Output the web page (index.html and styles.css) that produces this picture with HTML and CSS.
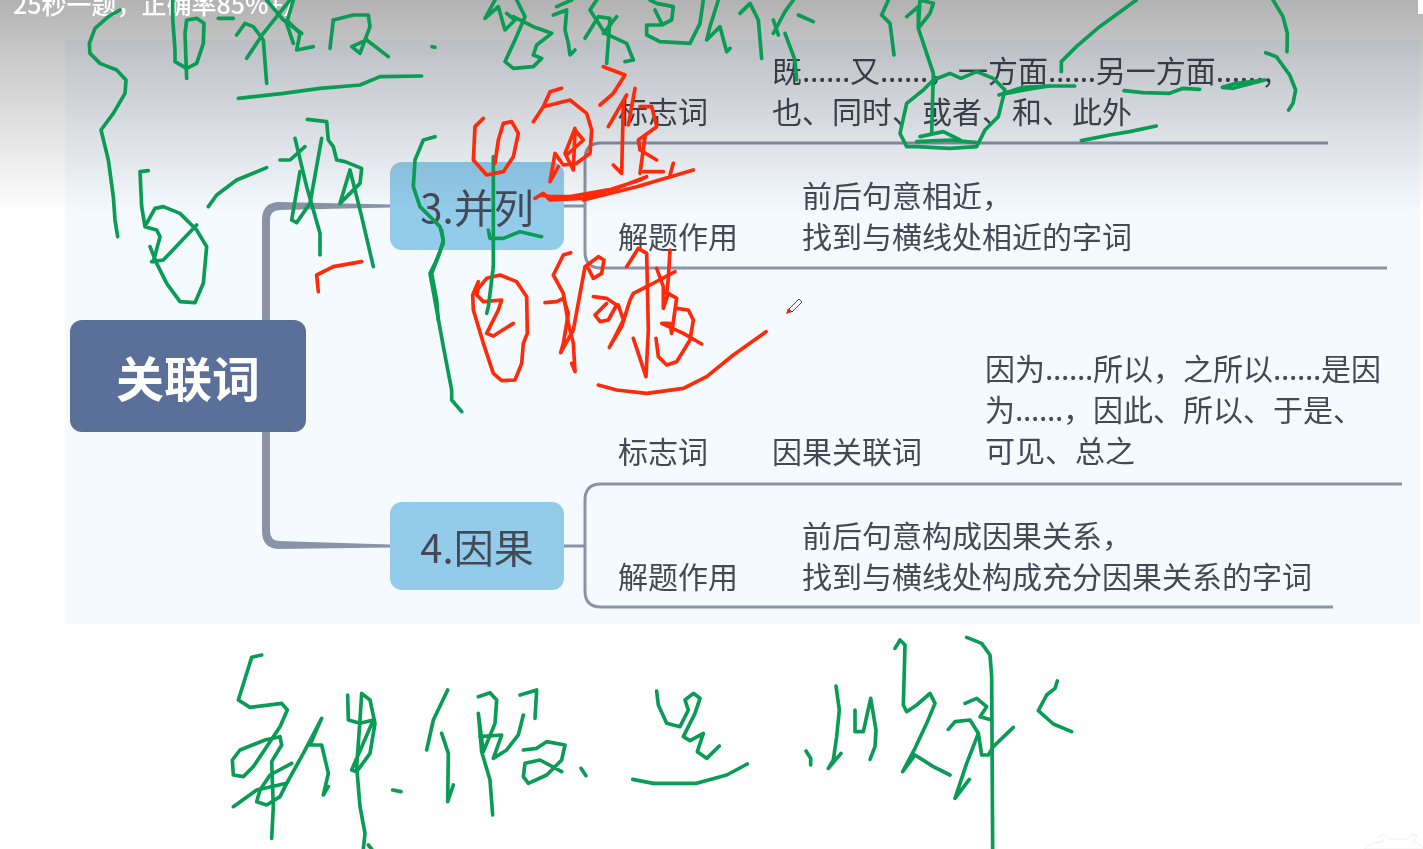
FILE: index.html
```html
<!DOCTYPE html>
<html lang="zh-CN">
<head>
<meta charset="utf-8">
<title>关联词</title>
<link rel="stylesheet" href="styles.css">
</head>
<body>
<main class="stage">
  <section class="slide">
    <svg class="links" width="1423" height="849" viewBox="0 0 1423 849" aria-hidden="true">
      <path class="trunk" d="M266 320V220Q266 206 280 206"/>
      <path class="taper" d="M278 202L390 204.5V207.5L278 210Z"/>
      <path class="trunk" d="M266 432V531Q266 545 280 545"/>
      <path class="taper" d="M278 541L390 544.5V547.5L278 549Z"/>
      <path class="branch" d="M564 206H585M1328 143H601Q585 143 585 159V252Q585 268 601 268H1387"/>
      <path class="branch" d="M564 546H585M1402 484H601Q585 484 585 500V591Q585 607 601 607H1333"/>
    </svg>
    <div class="root">关联词</div>
    <div class="topic topic-3">3.并列</div>
    <div class="topic topic-4">4.因果</div>
    <div class="t label-a">标志词</div>
    <div class="t body-a">既<span class="dots">......</span>又<span class="dots">......</span>，一方面<span class="dots">......</span>另一方面<span class="dots">......</span>,<br>也、同时、或者、和、此外</div>
    <div class="t label-b">解题作用</div>
    <div class="t body-b">前后句意相近，<br>找到与横线处相近的字词</div>
    <div class="t label-c">标志词</div>
    <div class="t mid-c">因果关联词</div>
    <div class="t body-c">因为<span class="dots">......</span>所以，之所以<span class="dots">......</span>是因<br>为<span class="dots">......</span>，因此、所以、于是、<br>可见、总之</div>
    <div class="t label-d">解题作用</div>
    <div class="t body-d">前后句意构成因果关系，<br>找到与横线处构成充分因果关系的字词</div>
  </section>
  <div class="shade"></div>
  <div class="caption">25秒一题，正确率85%+】</div>
  <svg class="ink" width="1423" height="849" viewBox="0 0 1423 849" aria-hidden="true">
    <g class="green" transform="scale(.33333)">
      <polyline points="360,30 325,50 285,85 268,130 270,160 300,190 350,210 378,240 375,280 340,340 303,390 325,480 340,590 345,660 353,710"/>
      <polyline points="518,0 518,55 525,150 525,185 560,205 590,190 610,130 612,70 590,55 560,60 555,100 560,235"/>
      <polyline points="655,55 700,55"/><polyline points="710,105 735,70 760,80 790,120 800,250"/>
      <polyline points="740,175 790,100 870,0"/><polyline points="860,60 900,100 890,150 940,140"/>
      <polyline points="800,0 850,60 905,100"/><polyline points="880,0 860,70 880,130"/>
      <polyline points="1000,60 990,145"/><polyline points="1000,60 1060,45 1105,45 1110,80 1080,160 1055,140 1100,120 1165,170"/>
      <polyline points="1296,140 1305,142"/>
      <polyline points="715,295 850,280 960,265 1080,255 1140,230 1265,228"/>
      <polyline points="625,620 650,585 710,540 800,503"/>
      <polyline points="840,480 870,480 915,440"/><polyline points="885,415 920,560 960,700 960,765"/>
      <polyline points="900,515 875,660 890,668 930,610 965,415"/>
      <polyline points="922,358 980,365 985,420 1000,440 1010,480 1035,485 1085,505 1080,550 1020,610 1050,510 1085,650 1120,800"/>
      <polyline points="445,512 420,515 425,620 435,680 470,690 480,710 460,785"/>
      <polyline points="440,670 465,625 490,620 540,640 590,690 620,740 610,850 585,908 540,905 500,850 470,790 450,740"/>
      <polyline points="455,785 490,780 590,675"/>
      <polyline points="1305,410 1270,420 1245,480 1240,560 1260,620 1320,680 1330,720 1315,770 1295,820 1310,900 1315,960"/>
    </g>
    <g class="green" transform="translate(400 230) scale(.33333)">
      <polyline points="125,0 130,40 105,100 90,130 110,240 130,350 155,480 155,510 185,545"/>
    </g>
    <g class="green" transform="translate(470 0) scale(.33333)">
      <polyline points="75,0 45,55 85,20 105,90 135,60 110,40"/>
      <polyline points="130,50 190,80 245,100 200,135 190,165 215,175 190,200 130,205 105,185 135,120 165,50 140,0"/>
      <polyline points="250,45 290,30 285,90 295,130 300,165 315,150"/><polyline points="305,0 260,20"/>
      <polyline points="345,115 385,50 420,55 410,190"/><polyline points="380,0 360,30 405,100 470,130 490,180 465,185"/><polyline points="440,50 400,100"/>
      <polyline points="540,0 560,10 610,20 605,60 575,75 530,75 530,105 570,125 660,130 690,70 700,0"/><polyline points="555,30 575,70"/>
      <polyline points="745,0 720,80 710,120 750,80 770,155 780,145"/>
      <polyline points="810,40 840,10 865,60 875,175"/>
      <polyline points="910,100 945,35 970,0"/><polyline points="985,45 1030,65"/><polyline points="945,100 975,180 980,240"/><polyline points="910,60 925,105"/>
      <polyline points="1235,45 1255,0"/><polyline points="1235,45 1260,70 1272,165"/>
      <polyline points="1310,50 1345,20 1345,85 1380,40 1390,10 1350,0 1345,85 1390,220 1385,400"/>
      <polyline points="1340,440 1310,440 1290,400 1310,310 1360,270 1390,240 1440,220 1473,235 1520,215 1570,235 1605,270 1585,350 1545,390 1520,440 1440,445 1340,440"/>
      <polyline points="1340,425 1440,420 1520,428"/><polyline points="1350,410 1420,395 1470,420"/>
      <polyline points="70,470 70,800"/>
      <polyline points="55,690 60,715 100,715 150,695 215,710"/>
    </g>
    <g class="green" transform="translate(943 0) scale(.33333)">
      <polyline points="355,215 355,185 400,140 470,80 580,0"/>
      <polyline points="990,0 1020,50 1033,100 1032,155"/>
      <polyline points="968,158 1000,170 1040,225 1058,270 1050,310 1037,330"/>
      <polyline points="168,285 240,262 320,258 395,258"/><polyline points="190,280 270,265 320,258"/>
      <polyline points="543,272 600,278 680,280 720,265 770,268"/>
      <polyline points="838,262 870,265 965,240 880,250 838,262"/>
      <polyline points="415,422 500,405 560,395 640,378"/>
    </g>
    <g class="red" transform="translate(470 0) scale(.33333)">
      <polyline points="40,355 15,380 10,480 50,525 100,515 130,470 145,400 125,365 100,370 85,420 75,490"/>
      <polyline points="275,265 240,275 220,320 190,365"/>
      <polyline points="220,320 300,300 350,340 365,390 360,460 320,490 280,495 255,460 240,545 265,500"/>
      <polyline points="315,385 285,460 310,510 315,390 340,420 290,465"/>
      <polyline points="400,200 465,225 430,280 390,315"/><polyline points="470,285 415,380"/>
      <polyline points="495,265 475,375"/><polyline points="460,310 455,520 430,495"/>
      <polyline points="510,320 545,320 560,380 505,420 510,450 560,480"/><polyline points="525,410 510,520"/>
      <polyline points="195,595 220,580 240,600 340,595 510,540 530,530 440,565 300,590 240,590 215,585"/>
      <polyline points="340,600 500,560 670,510"/><polyline points="610,490 600,525"/><polyline points="520,515 580,515"/>
    </g>
    <g class="red" transform="scale(.33333)">
      <polyline points="1085,785 1000,800 950,825 955,875"/>
    </g>
    <g class="red" transform="translate(400 230) scale(.33333)">
      <polyline points="235,155 218,195 220,240 250,340 280,430 305,452 345,450 365,400 370,340 382,310 380,200 350,155 300,135 260,145 235,175 230,195 250,215 305,210 295,240 260,310 280,318 340,280"/>
      <polyline points="512,68 490,75 460,135 490,190 505,280 520,340 525,425 515,400"/>
      <polyline points="435,218 470,215 490,205 505,250 490,340 482,368 520,300 555,110 595,80 612,90 605,130 580,145 565,115"/>
      <polyline points="580,200 620,205 650,225 625,270 600,275 585,255 620,220"/>
      <polyline points="655,225 670,270 640,330 628,352 665,290 690,210 700,190 750,165 825,125"/>
      <polyline points="680,110 715,55 740,70 745,300 738,440 700,325"/>
      <polyline points="770,115 790,170 790,235 805,190 830,205 815,310 810,280 785,280 850,310 905,342"/>
      <polyline points="810,60 805,145 800,190"/>
      <polyline points="830,235 865,240 880,270 870,330 830,395 800,405 775,380 768,325"/>
      <polyline points="595,465 650,480 740,490 850,475 920,440 1000,375 1098,305"/>
    </g>
    <g class="green" transform="translate(470 0) scale(.33333)">
      <polyline points="70,800 55,920 50,940"/>
    </g>
    <g class="green" transform="translate(200 620) scale(.33333)">
      <polyline points="185,105 155,112 115,240 150,262 245,250 262,270 240,320 190,395 160,440 130,470 100,465 97,420 120,390 195,360 240,350 245,375 215,425 220,560 215,655"/>
      <polyline points="100,560 170,510 260,490 310,400 365,295 330,375 365,375 385,460 370,525 385,500"/>
      <polyline points="275,430 210,465 180,510 170,545 200,555 240,530 260,490"/>
      <polyline points="443,225 445,300 480,310 520,300 455,450 470,455 510,400 525,310 510,240 485,220 480,300 470,440 480,560 495,640 490,687"/>
      <polyline points="505,675 515,687"/><polyline points="578,510 603,515"/>
      <polyline points="743,210 700,300 680,390"/><polyline points="725,340 745,400 743,545 760,495"/>
      <polyline points="835,230 870,218 890,240 885,310 850,395 835,280 845,395 870,480 878,585"/>
      <polyline points="840,350 905,345 880,415 920,390 955,345 970,285"/>
      <polyline points="960,225 1010,210 1005,295"/>
      <polyline points="970,390 1010,385 1040,365 1095,375 1085,420 1040,465 985,490 970,470 975,430 1020,420 1085,455"/>
      <polyline points="1143,445 1158,467"/>
    </g>
    <g class="green" transform="translate(620 620) scale(.33333)">
      <polyline points="38,478 100,490 230,490 320,465 382,432"/>
      <polyline points="110,213 115,255 140,310 180,320 205,270 195,240 220,220 240,235 225,280 190,350 210,362 250,340 232,395 260,415 298,378"/>
      <polyline points="558,393 572,415 572,435"/>
      <polyline points="648,198 658,270 650,350 640,420 625,445 663,400"/>
      <polyline points="705,270 705,335 730,335 752,235 768,330 765,380 750,418"/>
      <polyline points="825,85 840,60 855,75 850,255 860,275 890,255 930,220 945,250 920,310 885,385 848,455 885,405 940,440 990,465"/>
      <polyline points="985,328 1005,305 1050,300 1075,340 1040,430 1005,535 1048,478"/>
      <polyline points="1035,250 1070,235 1100,260 1080,290 1115,300"/>
      <polyline points="1180,322 1120,380 1105,405 1085,405 1075,340"/>
      <polyline points="1040,52 1085,70 1110,105 1115,170 1118,687"/>
      <polyline points="1312,183 1305,205 1280,225 1255,272 1300,312 1355,335"/>
    </g>
    <g class="pen">
      <path class="pen-body" d="M789 309L799 299L802 302L792 312Z"/>
      <path class="pen-tip" d="M786 314L788 308L792 312Z"/>
    </g>
    <path class="mark" d="M1380 836L1384 834L1389 839H1408L1413 834L1417 836L1413 841Q1423 845 1423 849H1364Q1370 843 1384 841Z"/>
    <rect class="corner" x="1418" y="0" width="5" height="14"/>
  </svg>
</main>
</body>
</html>
```
FILE: styles.css
```css
html, body { margin: 0; padding: 0; background: #fff; }
.stage {
  position: relative;
  width: 1423px;
  height: 849px;
  overflow: hidden;
  background: #fff;
  font-family: "Noto Sans CJK SC", "Noto Sans", sans-serif;
  filter: blur(.4px);
}
.slide { position: absolute; left: 65px; top: 40px; width: 1355px; height: 584px; background: #f5faff; }
.links { position: absolute; left: -65px; top: -40px; fill: none; stroke: #8a93a8; }
.trunk { stroke-width: 8; }
.taper { fill: #8a93a8; stroke: none; }
.branch { stroke-width: 3; }
.root {
  position: absolute; left: 5px; top: 280px; width: 236px; height: 112px;
  display: flex; align-items: center; justify-content: center;
  background: #5a7098; border-radius: 12px; color: #fff;
  font-size: 48px; font-weight: 700;
}
.topic {
  position: absolute; left: 325px; width: 174px; height: 88px;
  display: flex; align-items: center; justify-content: center;
  background: #93cceb; border-radius: 12px; color: #434a56; font-size: 40px;
}
.topic-3 { top: 122px; }
.topic-4 { top: 462px; }
.t { position: absolute; color: #434a56; font-size: 30px; line-height: 41px; white-space: nowrap; }
.dots { letter-spacing: -.35px; }
.label-a { left: 553px; top: 50px; }
.body-a { left: 707px; top: 9px; }
.label-b { left: 553px; top: 175px; }
.body-b { left: 737px; top: 134px; }
.label-c { left: 553px; top: 390px; }
.mid-c { left: 707px; top: 390px; }
.body-c { left: 920px; top: 307px; }
.label-d { left: 553px; top: 515px; }
.body-d { left: 737px; top: 474px; }
.shade {
  position: absolute; left: 0; top: 0; width: 100%; height: 215px;
  background: linear-gradient(to bottom, rgba(0, 0, 0, .3), rgba(0, 0, 0, .2) 30%, rgba(0, 0, 0, 0));
}
.caption {
  position: absolute; left: 13px; top: -15px;
  color: #fff; font-size: 25px; font-weight: 500; line-height: 36px; white-space: nowrap;
}
.ink { position: absolute; left: 0; top: 0; }
.green polyline, .red polyline { fill: none; stroke-width: 11; stroke-linejoin: round; stroke-linecap: round; }
.green polyline { stroke: #0a9c55; }
.red polyline { stroke: #ff2a0a; }
.pen-body { fill: #fff; stroke: #222; stroke-width: .8; }
.pen-tip { fill: #f0281a; }
.mark { fill: #fff; stroke: #f0f0f0; stroke-width: 1; }
.corner { fill: #fff; }
```
